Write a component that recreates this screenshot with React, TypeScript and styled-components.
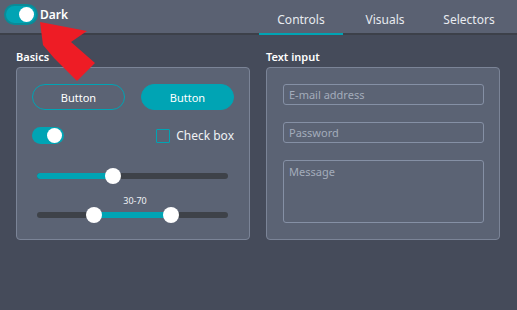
import React from "react";
import styled, { createGlobalStyle, css } from "styled-components";

const teal = "#00a4b4";
const track = "#3e4249";

const GlobalStyle = createGlobalStyle`
  html, body {
    margin: 0;
    padding: 0;
    background: #454b5a;
  }
  body {
    font-family: "Noto Sans", "Open Sans", sans-serif;
    color: #ffffff;
  }
  * {
    box-sizing: border-box;
  }
`;

const Page = styled.div`
  position: relative;
  width: 517px;
  height: 310px;
  background: #454b5a;
  overflow: hidden;
`;

const Header = styled.header`
  display: flex;
  justify-content: space-between;
  align-items: stretch;
  height: 35px;
  background: #5a6172;
  border-bottom: 2px solid #3c4049;
`;

const ThemeSwitch = styled.div`
  display: flex;
  align-items: center;
  gap: 2px;
  padding: 0 0 4px 4px;
  font-size: 12px;
  font-weight: 600;
`;

const Tabs = styled.nav`
  display: flex;
  padding-right: 6px;
`;

const Tab = styled.div<{ $active?: boolean }>`
  width: 84px;
  display: flex;
  align-items: center;
  justify-content: center;
  padding-top: 6px;
  font-size: 12px;
  color: #e8ebf0;
  margin-bottom: -2px;
  border-bottom: 2px solid transparent;
  ${(p) =>
    p.$active &&
    css`
      border-bottom-color: ${teal};
    `}
`;

const Main = styled.main`
  display: grid;
  grid-template-columns: 234px 234px;
  gap: 16px;
  padding: 13px 16px;
`;

const Section = styled.section`
  display: flex;
  flex-direction: column;
`;

const Label = styled.div`
  font-size: 11px;
  font-weight: 600;
  height: 19px;
  line-height: 17px;
`;

const Panel = styled.div`
  height: 173px;
  background: #5b6374;
  border: 1px solid #7b8497;
  border-radius: 4px;
  padding: 16px 15px 0;
  display: flex;
  flex-direction: column;
`;

const ButtonRow = styled.div`
  display: flex;
  justify-content: space-between;
`;

const Button = styled.button<{ $filled?: boolean }>`
  width: 93px;
  height: 26px;
  border-radius: 13px;
  border: 1px solid ${teal};
  background: ${(p) => (p.$filled ? teal : "transparent")};
  color: #ffffff;
  font-family: inherit;
  font-size: 11px;
  padding: 0;
`;

const ToggleRow = styled.div`
  display: flex;
  justify-content: space-between;
  align-items: center;
  height: 17px;
  margin-top: 17px;
`;

const Toggle = styled.div<{ $ring?: boolean }>`
  position: relative;
  width: ${(p) => (p.$ring ? 34 : 32)}px;
  height: ${(p) => (p.$ring ? 21 : 17)}px;
  border-radius: 11px;
  background: ${teal};
  ${(p) =>
    p.$ring &&
    css`
      border: 2px solid #0a8b98;
    `}
`;

const Knob = styled.div<{ $size: number }>`
  position: absolute;
  right: 2px;
  top: 50%;
  width: ${(p) => p.$size}px;
  height: ${(p) => p.$size}px;
  margin-top: ${(p) => -p.$size / 2}px;
  border-radius: 50%;
  background: #ffffff;
`;

const CheckLabel = styled.label`
  display: flex;
  align-items: center;
  gap: 6px;
  font-size: 12px;
  color: #f0f2f5;
`;

const CheckBox = styled.span`
  width: 14px;
  height: 14px;
  border: 1.5px solid ${teal};
  border-radius: 1px;
`;

const SliderBox = styled.div<{ $top: number }>`
  position: relative;
  height: 16px;
  margin: ${(p) => p.$top}px 6px 0 5px;
`;

const Track = styled.div`
  position: absolute;
  left: 0;
  right: 0;
  top: 5px;
  height: 6px;
  border-radius: 3px;
  background: ${track};
`;

const Fill = styled.div`
  position: absolute;
  top: 5px;
  height: 6px;
  border-radius: 3px;
  background: ${teal};
`;

const Thumb = styled.div`
  position: absolute;
  top: 0;
  width: 16px;
  height: 16px;
  margin-left: -8px;
  border-radius: 50%;
  background: #ffffff;
`;

const RangeLabel = styled.div`
  text-align: center;
  font-size: 9px;
  height: 12px;
  line-height: 12px;
  margin-top: 11px;
  padding-left: 4px;
  color: #f0f2f5;
`;

const InputPanel = styled(Panel)`
  padding: 16px 15px 0 16px;
  gap: 17px;
`;

const Field = styled.div<{ $tall?: boolean }>`
  height: ${(p) => (p.$tall ? 63 : 21)}px;
  border: 1px solid #8590a5;
  border-radius: 3px;
  padding: ${(p) => (p.$tall ? "3px 5px" : "0 5px")};
  display: flex;
  align-items: ${(p) => (p.$tall ? "flex-start" : "center")};
  font-size: 11px;
  color: #a3acbb;
`;

const Arrow = styled.svg`
  position: absolute;
  left: 0;
  top: 0;
  pointer-events: none;
`;

const pct = (v: number) => `${v}%`;

export default function App() {
  const single = 40;
  const range = [30, 70];
  return (
    <Page>
      <GlobalStyle />
      <Header>
        <ThemeSwitch>
          <Toggle $ring>
            <Knob $size={15} />
          </Toggle>
          Dark
        </ThemeSwitch>
        <Tabs>
          <Tab $active>Controls</Tab>
          <Tab>Visuals</Tab>
          <Tab>Selectors</Tab>
        </Tabs>
      </Header>
      <Main>
        <Section>
          <Label>Basics</Label>
          <Panel>
            <ButtonRow>
              <Button>Button</Button>
              <Button $filled>Button</Button>
            </ButtonRow>
            <ToggleRow>
              <Toggle>
                <Knob $size={15} />
              </Toggle>
              <CheckLabel>
                <CheckBox />
                Check box
              </CheckLabel>
            </ToggleRow>
            <SliderBox $top={24}>
              <Track />
              <Fill style={{ left: 0, width: pct(single) }} />
              <Thumb style={{ left: pct(single) }} />
            </SliderBox>
            <RangeLabel>30-70</RangeLabel>
            <SliderBox $top={0}>
              <Track />
              <Fill
                style={{ left: pct(range[0]), width: pct(range[1] - range[0]) }}
              />
              <Thumb style={{ left: pct(range[0]) }} />
              <Thumb style={{ left: pct(range[1]) }} />
            </SliderBox>
          </Panel>
        </Section>
        <Section>
          <Label>Text input</Label>
          <InputPanel>
            <Field>E-mail address</Field>
            <Field>Password</Field>
            <Field $tall>Message</Field>
          </InputPanel>
        </Section>
      </Main>
      <Arrow width="517" height="310" viewBox="0 0 517 310">
        <polygon
          points="40,22 87,31 71,42 95,63 77,81 54,58 43,45"
          fill="#ee1c25"
        />
      </Arrow>
    </Page>
  );
}
